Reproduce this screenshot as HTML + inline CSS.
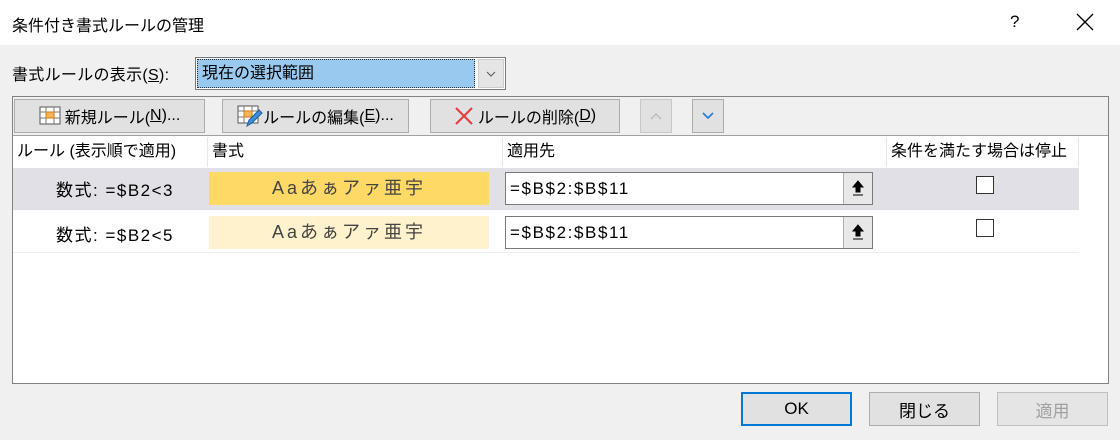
<!DOCTYPE html>
<html><head><meta charset="utf-8"><style>
*{box-sizing:border-box;margin:0;padding:0}
body{width:1120px;height:440px;background:#f0f0f0;font-family:"Liberation Sans","Noto Sans CJK JP",sans-serif;font-size:16px;color:#000;position:relative;overflow:hidden}
.a{position:absolute}
.btn{position:absolute;background:#e1e1e1;border:1px solid #adadad;display:flex;align-items:center;justify-content:center;white-space:nowrap}
.hdr{position:absolute;top:137px;height:30px;line-height:30px;padding-left:4px;border-right:1px solid #e8e8e8;background:#fff}
.cb{position:absolute;width:18px;height:18px;border:1px solid #333;background:#fff}
.inp{position:absolute;background:#fff;border:1px solid #7a7a7a;height:33px;line-height:31px;padding-left:4px;font-size:17px;letter-spacing:1.6px}
.up{position:absolute;right:0;top:0;width:29px;height:31px;background:#e8e8e8;border-left:1px solid #b0b0b0}
</style></head><body>
<div class="a" style="left:0;top:0;width:1120px;height:45px;background:#fff"></div>
<div class="a" style="left:12px;top:12px;font-size:16px">条件付き書式ルールの管理</div>
<div class="a" style="left:1010px;top:12px;font-size:17px">?</div>
<svg class="a" style="left:1076px;top:13px" width="18" height="18"><path d="M1 1L17 17M17 1L1 17" stroke="#000" stroke-width="1.3"/></svg>

<div class="a" style="left:12px;top:61px;letter-spacing:0.3px">書式ルールの表示(<u>S</u>):</div>
<div class="a" style="left:195px;top:57px;width:311px;height:33px;background:#fff;border:1px solid #7a7a7a"></div>
<div class="a" style="left:197px;top:59px;width:278px;height:29px;background:#99c9ef;border:1px dotted #333;padding-left:4px;line-height:27px">現在の選択範囲</div>
<div class="a" style="left:478px;top:59px;width:26px;height:29px;background:#e5e5e5;border:1px solid #ccc"><svg width="24" height="27"><path d="M8 12L12 16L16 12" stroke="#555" fill="none"/></svg></div>

<div class="a" style="left:12px;top:96px;width:1097px;height:288px;border:1px solid #828282;background:#fff"></div>
<div class="a" style="left:13px;top:97px;width:1095px;height:39px;background:#f0f0f0;border-bottom:1px solid #a0a0a0"></div>
<div class="btn" style="left:14px;top:99px;width:191px;height:34px">
<svg width="24" height="20" style="margin-right:2px"><rect x="1" y="1" width="20" height="17" fill="#fff" stroke="#555"/><path d="M1 6H21M1 12H21M7 1V18M15 1V18" stroke="#777"/><rect x="7" y="6" width="8" height="6" fill="#f5b55b" stroke="#d87a10"/></svg>新規ルール(<u>N</u>)...</div>
<div class="btn" style="left:222px;top:99px;width:187px;height:34px">
<svg width="26" height="22"><rect x="1" y="1" width="20" height="17" fill="#fff" stroke="#555"/><path d="M1 6H21M1 12H21M7 1V18M15 1V18" stroke="#777"/><rect x="7" y="6" width="8" height="6" fill="#f5b55b" stroke="#d87a10"/><path d="M10 21L12 15L22 5L25 8L15 18Z" fill="#3c8fd8" stroke="#1d5f9e"/></svg>ルールの編集(<u>E</u>)...</div>
<div class="btn" style="left:430px;top:99px;width:190px;height:34px"><svg width="20" height="20" style="margin-right:4px"><path d="M2 2L18 18M18 2L2 18" stroke="#e23b3b" stroke-width="2"/></svg>ルールの削除(<u>D</u>)</div>
<div class="btn" style="left:640px;top:99px;width:32px;height:34px;border-color:#c8c8c8"><svg width="14" height="10"><path d="M2 8L7 3L12 8" stroke="#bbb" fill="none" stroke-width="1.3"/></svg></div>
<div class="btn" style="left:692px;top:99px;width:32px;height:34px"><svg width="14" height="10"><path d="M2 2L7 7L12 2" stroke="#1e7bd6" fill="none" stroke-width="1.6"/></svg></div>

<div class="hdr" style="left:13px;width:195px">ルール (表示順で適用)</div>
<div class="hdr" style="left:208px;width:295px">書式</div>
<div class="hdr" style="left:503px;width:384px">適用先</div>
<div class="hdr" style="left:887px;width:192px">条件を満たす場合は停止</div>

<div class="a" style="left:13px;top:168px;width:1066px;height:42px;background:#e0e0e6"></div>
<div class="a" style="left:13px;top:252px;width:1066px;height:1px;background:#eee"></div>

<div class="a" style="left:56px;top:176px;font-size:17px;letter-spacing:1.5px">数式: =$B2&lt;3</div>
<div class="a" style="left:209px;top:172px;width:280px;height:33px;background:#ffd966;text-align:center;line-height:33px;font-size:18px;color:#444;letter-spacing:3px">Aaあぁアァ亜宇</div>
<div class="inp" style="left:505px;top:172px;width:368px">=$B$2:$B$11<div class="up"><svg width="28" height="31"><path d="M14 8L9 14H12V19H16V14H19Z M9 22H19" fill="#000" stroke="#000" stroke-width="1"/></svg></div></div>
<div class="cb" style="left:976px;top:176px"></div>

<div class="a" style="left:56px;top:221px;font-size:17px;letter-spacing:1.5px">数式: =$B2&lt;5</div>
<div class="a" style="left:209px;top:216px;width:280px;height:33px;background:#fff2cc;text-align:center;line-height:33px;font-size:18px;color:#444;letter-spacing:3px">Aaあぁアァ亜宇</div>
<div class="inp" style="left:505px;top:216px;width:368px">=$B$2:$B$11<div class="up"><svg width="28" height="31"><path d="M14 8L9 14H12V19H16V14H19Z M9 22H19" fill="#000" stroke="#000" stroke-width="1"/></svg></div></div>
<div class="cb" style="left:976px;top:219px"></div>

<div class="btn" style="left:741px;top:392px;width:111px;height:34px;border:2px solid #0078d7;font-size:17px">OK</div>
<div class="btn" style="left:869px;top:392px;width:111px;height:34px;font-size:17px">閉じる</div>
<div class="btn" style="left:997px;top:392px;width:111px;height:34px;border-color:#bfbfbf;color:#a0a0a0;background:#e5e5e5;font-size:17px">適用</div>
</body></html>
